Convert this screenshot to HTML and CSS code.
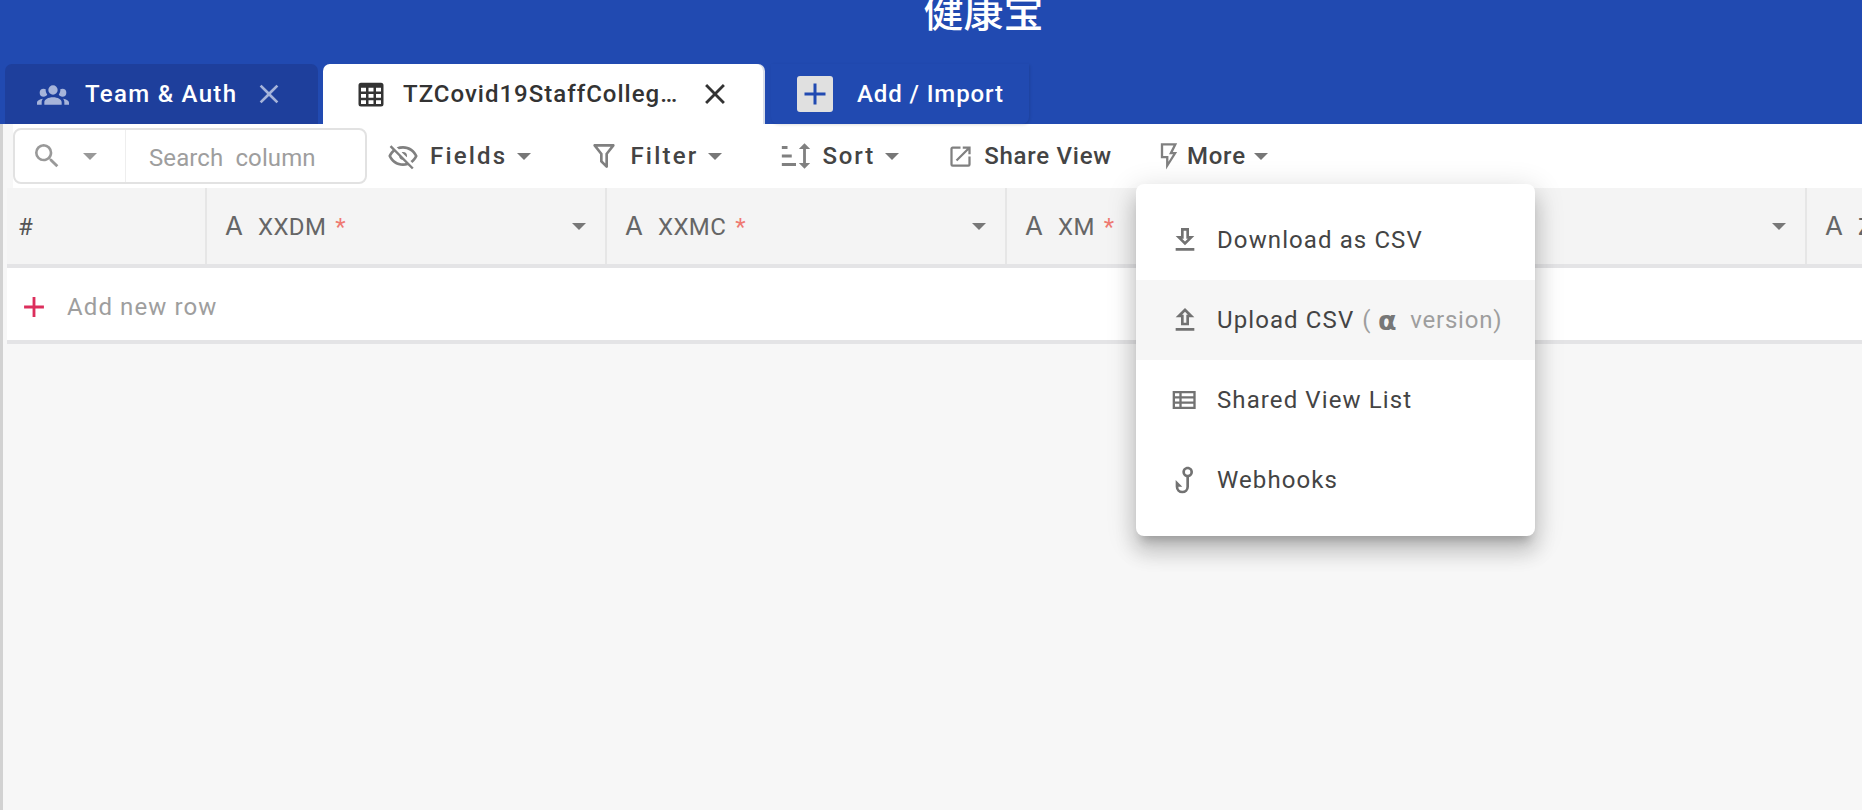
FILE: index.html
```html
<!DOCTYPE html>
<html lang="zh">
<head>
  <meta charset="UTF-8">
  <title>健康宝</title>
  <link rel="stylesheet" href="styles.css">
</head>
<body>

  <!-- Top bar with tabs -->
  <header class="topbar">
    <div class="app-title">健康宝</div>
    <div class="tabs">
      <div class="tab tab-team">
        <svg class="icon tab-icon-team" viewBox="0 0 24 24"><path d="M12,5.5A3.5,3.5 0 0,1 15.5,9A3.5,3.5 0 0,1 12,12.5A3.5,3.5 0 0,1 8.5,9A3.5,3.5 0 0,1 12,5.5M5,8C5.56,8 6.08,8.15 6.53,8.42C6.38,9.85 6.8,11.27 7.66,12.38C7.16,13.34 6.16,14 5,14A3,3 0 0,1 2,11A3,3 0 0,1 5,8M19,8A3,3 0 0,1 22,11A3,3 0 0,1 19,14C17.84,14 16.84,13.34 16.34,12.38C17.2,11.27 17.62,9.85 17.47,8.42C17.92,8.15 18.44,8 19,8M5.5,18.25C5.5,16.18 8.41,14.5 12,14.5C15.59,14.5 18.5,16.18 18.5,18.25V20H5.5V18.25M0,20V18.5C0,17.11 1.89,15.94 4.45,15.6C3.86,16.28 3.5,17.22 3.5,18.25V20H0M24,20H20.5V18.25C20.5,17.22 20.14,16.28 19.55,15.6C22.11,15.94 24,17.11 24,18.5V20Z"/></svg>
        <span class="tab-label">Team &amp; Auth</span>
        <svg class="icon tab-close" viewBox="0 0 24 24"><path d="M19,6.41L17.59,5L12,10.59L6.41,5L5,6.41L10.59,12L5,17.59L6.41,19L12,13.41L17.59,19L19,17.59L13.41,12L19,6.41Z"/></svg>
      </div>
      <div class="tab tab-active">
        <svg class="icon tab-icon-table" viewBox="0 0 24 24"><path d="M4,3H20A2,2 0 0,1 22,5V20A2,2 0 0,1 20,22H4A2,2 0 0,1 2,20V5A2,2 0 0,1 4,3M4,7V10H8V7H4M10,7V10H14V7H10M20,10V7H16V10H20M4,12V15H8V12H4M4,20H8V17H4V20M10,12V15H14V12H10M10,20H14V17H10V20M20,20V17H16V20H20M20,12H16V15H20V12Z"/></svg>
        <span class="tab-label tab-label-long">TZCovid19StaffCollegeInfo</span>
        <svg class="icon tab-close" viewBox="0 0 24 24"><path d="M19,6.41L17.59,5L12,10.59L6.41,5L5,6.41L10.59,12L5,17.59L6.41,19L12,13.41L17.59,19L19,17.59L13.41,12L19,6.41Z"/></svg>
      </div>
      <div class="tab tab-add">
        <span class="add-box">
          <svg class="icon" viewBox="0 0 24 24"><path d="M19,13H13V19H11V13H5V11H11V5H13V11H19V13Z"/></svg>
        </span>
        <span class="tab-label">Add / Import</span>
      </div>
    </div>
  </header>

  <main class="content">
    <!-- Toolbar -->
    <div class="toolbar">
      <div class="search-box">
        <div class="search-left">
          <svg class="icon search-icon" viewBox="0 0 24 24"><path d="M9.5,3A6.5,6.5 0 0,1 16,9.5C16,11.11 15.41,12.59 14.44,13.73L14.71,14H15.5L20.5,19L19,20.5L14,15.5V14.71L13.73,14.44C12.59,15.41 11.11,16 9.5,16A6.5,6.5 0 0,1 3,9.5A6.5,6.5 0 0,1 9.5,3M9.5,5C7,5 5,7 5,9.5C5,12 7,14 9.5,14C12,14 14,12 14,9.5C14,7 12,5 9.5,5Z"/></svg>
          <span class="caret"></span>
        </div>
        <span class="search-placeholder">Search&nbsp; column</span>
      </div>
      <div class="tool tool-fields">
        <svg class="icon tool-icon" viewBox="0 0 24 24"><path d="M2,5.27L3.28,4L20,20.72L18.73,22L15.65,18.92C14.5,19.3 13.28,19.5 12,19.5C7,19.5 2.73,16.39 1,12C1.69,10.24 2.79,8.69 4.19,7.46L2,5.27M12,9A3,3 0 0,1 15,12C15,12.35 14.94,12.69 14.83,13L11,9.17C11.31,9.06 11.65,9 12,9M12,4.5C17,4.5 21.27,7.61 23,12C22.18,14.08 20.79,15.88 19,17.19L17.58,15.76C18.94,14.82 20.06,13.54 20.82,12C19.17,8.64 15.76,6.5 12,6.5C10.91,6.5 9.84,6.68 8.84,7L7.3,5.47C8.74,4.85 10.33,4.5 12,4.5M3.18,12C4.83,15.36 8.24,17.5 12,17.5C12.69,17.5 13.37,17.43 14,17.29L11.72,15C10.29,14.85 9.15,13.71 9,12.28L5.6,8.87C4.61,9.72 3.78,10.78 3.18,12Z"/></svg>
        <span>Fields</span><span class="caret"></span>
      </div>
      <div class="tool tool-filter">
        <svg class="icon tool-icon" viewBox="0 0 24 24"><path d="M15,19.88C15.04,20.18 14.94,20.5 14.71,20.71C14.32,21.1 13.69,21.1 13.3,20.71L9.29,16.7C9.06,16.47 8.96,16.16 9,15.87V10.75L4.21,4.62C3.87,4.19 3.95,3.56 4.38,3.22C4.57,3.08 4.78,3 5,3V3H19V3C19.22,3 19.43,3.08 19.62,3.22C20.05,3.56 20.13,4.19 19.79,4.62L15,10.75V19.88M7.04,5L11,10.06V15.58L13,17.58V10.05L16.96,5H7.04Z"/></svg>
        <span>Filter</span><span class="caret"></span>
      </div>
      <div class="tool tool-sort">
        <svg class="icon tool-icon" viewBox="0 0 24 24"><path d="M18 21L14 17H17V7H14L18 3L22 7H19V17H22M2 19V17H12V19M2 13V11H9V13M2 7V5H6V7H2Z"/></svg>
        <span>Sort</span><span class="caret"></span>
      </div>
      <div class="tool tool-share">
        <svg class="icon tool-icon" viewBox="0 0 24 24"><path d="M14,3V5H17.59L7.76,14.83L9.17,16.24L19,6.41V10H21V3M19,19H5V5H12V3H5C3.89,3 3,3.9 3,5V19A2,2 0 0,0 5,21H19A2,2 0 0,0 21,19V12H19V19Z"/></svg>
        <span>Share View</span>
      </div>
      <div class="tool tool-more">
        <svg class="icon tool-icon" viewBox="0 0 24 24"><path fill-rule="evenodd" d="M5,1H19L15.3,8.5H19L9.5,23.5V14H5ZM7,3V12H11.5V17L15.5,10.5H12L15.8,3Z"/></svg>
        <span>More</span><span class="caret"></span>
      </div>
    </div>

    <!-- Grid -->
    <div class="grid">
      <div class="grid-head">
        <div class="cell cell-index">#</div>
        <div class="cell"><span class="type-a">A</span><span class="col-name">XXDM</span><span class="req">*</span><span class="caret"></span></div>
        <div class="cell"><span class="type-a">A</span><span class="col-name">XXMC</span><span class="req">*</span><span class="caret"></span></div>
        <div class="cell"><span class="type-a">A</span><span class="col-name">XM</span><span class="req">*</span><span class="caret"></span></div>
        <div class="cell"><span class="caret"></span></div>
        <div class="cell"><span class="type-a">A</span><span class="col-name">Z</span></div>
      </div>
      <div class="grid-add">
        <svg class="icon add-plus" viewBox="0 0 24 24"><path d="M19,13H13V19H11V13H5V11H11V5H13V11H19V13Z"/></svg>
        <span>Add new row</span>
      </div>
    </div>
  </main>

  <!-- More menu -->
  <div class="menu">
    <div class="menu-item">
      <svg class="icon menu-icon" viewBox="0 0 24 24"><path d="M13,5V11H14.17L12,13.17L9.83,11H11V5H13M15,3H9V9H5L12,16L19,9H15V3M19,18H5V20H19V18Z"/></svg>
      <span>Download as CSV</span>
    </div>
    <div class="menu-item menu-item-hover">
      <svg class="icon menu-icon" viewBox="0 0 24 24"><path d="M9,10V16H15V10H19L12,3L5,10H9M12,5.8L14.2,8H13V14H11V8H9.8L12,5.8M19,18H5V20H19V18Z"/></svg>
      <span>Upload CSV</span>
      <span class="menu-note">( <b class="alpha">α</b> version)</span>
    </div>
    <div class="menu-item">
      <svg class="icon menu-icon" viewBox="0 0 24 24"><path fill-rule="evenodd" d="M2.75,5.25H20V18.75H2.75ZM4.5,7V9.1H7.75V7ZM9.5,7V9.1H18.25V7ZM4.5,10.95V13.05H7.75V10.95ZM9.5,10.95V13.05H18.25V10.95ZM4.5,14.9V17H7.75V14.9ZM9.5,14.9V17H18.25V14.9Z"/></svg>
      <span>Shared View List</span>
    </div>
    <div class="menu-item">
      <svg class="icon menu-icon" viewBox="0 0 24 24"><path d="M18,6C18,7.82 16.76,9.41 15,9.86V17A5,5 0 0,1 10,22A5,5 0 0,1 5,17V12L10,17H7A3,3 0 0,0 10,20A3,3 0 0,0 13,17V9.86C11.23,9.4 10,7.8 10,5.97C10,3.76 11.8,2 14,2C16.22,2 18,3.79 18,6M14,8A2,2 0 0,0 16,6A2,2 0 0,0 14,4A2,2 0 0,0 12,6A2,2 0 0,0 14,8Z"/></svg>
      <span>Webhooks</span>
    </div>
  </div>

</body>
</html>
```

FILE: styles.css
```css
* { margin: 0; padding: 0; box-sizing: border-box; }

body {
  font-family: Roboto, "Noto Sans CJK SC", sans-serif;
  font-size: 24px;
  background-color: #f7f7f7;
  color: #333;
  height: 810px;
  overflow: hidden;
}

.icon {
  display: block;
  fill: currentColor;
  flex-shrink: 0;
}

.caret {
  display: block;
  width: 0;
  height: 0;
  border-left: 7px solid transparent;
  border-right: 7px solid transparent;
  border-top: 7px solid #777;
  flex-shrink: 0;
}

/* Top bar */
.topbar {
  background-color: #214ab1;
  height: 124px;
  color: #fff;
}

.app-title {
  height: 64px;
  padding-left: 105px;
  text-align: center;
  font-size: 40px;
  font-weight: 500;
  line-height: 28px;
  overflow: hidden;
}

.tabs {
  display: flex;
  height: 60px;
  padding-left: 5px;
  gap: 5px;
}

.tab {
  display: flex;
  align-items: center;
  border-radius: 7px 7px 0 0;
  font-weight: 500;
  letter-spacing: 1.3px;
}

.tab-team {
  width: 313px;
  padding-left: 32px;
  background-color: #1e3f9c;
}

.tab-icon-team { width: 32px; height: 32px; color: #a6b4da; margin-right: 16px; }

.tab-team .tab-close { width: 32px; height: 32px; color: #a6b4da; margin-left: 16px; }

.tab-active {
  width: 440px;
  padding-left: 33px;
  background-color: #fff;
  color: #333;
  box-shadow: 2px 0 0 #d9deeb;
}

.tab-icon-table { width: 30px; height: 30px; margin-right: 17px; }

.tab-label-long {
  width: 278px;
  letter-spacing: 1px;
  overflow: hidden;
  white-space: nowrap;
  text-overflow: ellipsis;
}

.tab-active .tab-close { width: 34px; height: 34px; margin-left: 17px; }

.tab-add {
  width: 258px;
  padding-left: 26px;
  margin-left: 3px;
  border-radius: 0 0 7px 7px;
  letter-spacing: 0.9px;
  box-shadow: 1px 1px 3px rgba(0, 0, 0, 0.12);
}

.add-box {
  display: flex;
  align-items: center;
  justify-content: center;
  width: 36px;
  height: 36px;
  border-radius: 3px;
  background-color: #e0e0e0;
  color: #214ab1;
  margin-right: 24px;
}

.add-box .icon { width: 36px; height: 36px; }

/* Content area */
.content {
  border-left: 3px solid #d2d2d2;
  height: 686px;
  overflow: hidden;
}

.toolbar {
  display: flex;
  align-items: center;
  height: 64px;
  margin-left: 10px;
  background-color: #fff;
  color: #444;
  letter-spacing: 2.2px;
}

.search-box {
  display: flex;
  align-items: center;
  width: 354px;
  height: 56px;
  border: 2px solid #e2e2e2;
  border-radius: 8px;
}

.search-left {
  display: flex;
  align-items: center;
  height: 100%;
  width: 111px;
  padding-left: 16px;
  border-right: 1px solid #eeeeee;
  color: #999;
}

.search-left .caret { border-top-color: #999; }

.search-icon { width: 32px; height: 32px; margin-right: 20px; }

.search-placeholder {
  margin-left: 23px;
  margin-top: 3px;
  color: #9e9e9e;
  letter-spacing: 0.1px;
  white-space: nowrap;
}

.tool {
  display: flex;
  align-items: center;
  color: #444;
  font-weight: 500;
  white-space: nowrap;
}

.tool-icon { color: #808080; }

.tool .caret { margin-left: 10px; }

.tool-fields { margin-left: 20px; }
.tool-fields .tool-icon { width: 32px; height: 32px; margin-right: 11px; }
.tool-filter { margin-left: 57px; }
.tool-filter .tool-icon { width: 32px; height: 32px; margin-right: 10px; }
.tool-sort { margin-left: 57px; letter-spacing: 1.9px; }
.tool-sort .tool-icon { width: 34px; height: 34px; margin-right: 9px; }
.tool-share { margin-left: 48px; letter-spacing: 0.75px; }
.tool-share .tool-icon { width: 27px; height: 27px; margin-right: 10px; }
.tool-more { margin-left: 43px; letter-spacing: 0.8px; }
.tool-more .tool-icon { width: 28px; height: 28px; margin-right: 4px; }
.tool-more .caret { margin-left: 8px; }

/* Grid */
.grid {
  margin-left: 4px;
}

.grid-head {
  display: flex;
  height: 80px;
  background-color: #f4f4f4;
  border-bottom: 4px solid #e4e4e6;
  color: #666;
  white-space: nowrap;
}

.cell {
  display: flex;
  align-items: center;
  width: 400px;
  flex-shrink: 0;
  padding: 2px 18px 0;
  border-right: 2px solid #e6e6e6;
}

.cell-index {
  width: 200px;
  padding-left: 11px;
  color: #555;
}

.cell .caret { margin-left: auto; margin-right: 1px; margin-top: -2px; }

.type-a {
  font-family: Inter, sans-serif;
  font-size: 26px;
  margin-top: -4px;
  margin-right: 15px;
}

.col-name { letter-spacing: 0.4px; }

.req {
  color: #ef7a72;
  margin-left: 9px;
  margin-top: -1px;
}

.grid-add {
  display: flex;
  align-items: center;
  height: 76px;
  padding-left: 10px;
  padding-top: 6px;
  background-color: #fff;
  border-bottom: 4px solid #e4e4e6;
  color: #9e9e9e;
  letter-spacing: 1.1px;
}

.add-plus {
  width: 34px;
  height: 34px;
  color: #dc2e5c;
  margin-right: 16px;
}

/* More menu */
.menu {
  position: absolute;
  left: 1136px;
  top: 184px;
  width: 399px;
  padding: 16px 0;
  background-color: #fff;
  border-radius: 8px;
  box-shadow: 0 10px 10px -6px rgba(0, 0, 0, 0.2), 0 16px 20px 2px rgba(0, 0, 0, 0.14), 0 6px 28px 4px rgba(0, 0, 0, 0.12);
}

.menu-item {
  display: flex;
  align-items: center;
  height: 80px;
  padding-left: 33px;
  color: #444;
  letter-spacing: 1.1px;
  white-space: nowrap;
}

.menu-item-hover { background-color: #f6f6f6; }

.menu-icon {
  width: 32px;
  height: 32px;
  color: #727272;
  margin-right: 16px;
}

.menu-note {
  display: flex;
  align-items: center;
  margin-left: 8px;
  color: #9e9e9e;
  letter-spacing: 0.8px;
  white-space: pre;
}

.alpha {
  font-family: "DejaVu Sans", sans-serif;
  font-size: 27px;
  font-weight: 700;
  color: #777;
  margin-right: 6px;
}
```
